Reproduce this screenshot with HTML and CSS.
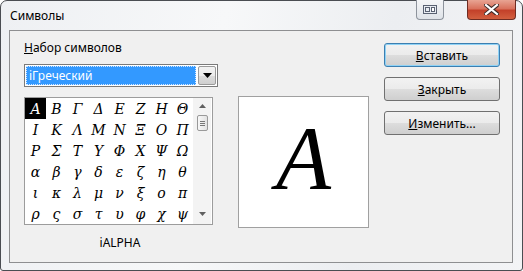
FILE: index.html
```html
<!DOCTYPE html>
<html>

<head>
    <title>Символы</title>
    <meta http-equiv="Content-Type" content="text/html;charset=UTF-8">
    <link rel="stylesheet" href="styles.css">
</head>

<body>
    <div class="window">
        <div class="titlebar">
            <span class="title">Символы</span>
            <div class="caption-buttons">
                <div class="caption-btn caption-btn--restore">
                    <svg width="14" height="9" viewBox="0 0 14 9">
                        <rect x="0.5" y="0.5" width="13" height="8" fill="#e8ecf2" stroke="#5a6272"/>
                        <rect x="2.5" y="2.5" width="4" height="4" fill="none" stroke="#5a6272"/>
                        <rect x="8.5" y="2.5" width="3" height="4" fill="#fff" stroke="#5a6272"/>
                    </svg>
                </div>
                <div class="caption-btn caption-btn--close">
                    <svg width="15" height="11" viewBox="0 0 15 11">
                        <path d="M2 1 L13 10 M13 1 L2 10" stroke="#3b2a28" stroke-width="4.2" stroke-linecap="square"/>
                        <path d="M2 1 L13 10 M13 1 L2 10" stroke="#fff" stroke-width="2.2" stroke-linecap="square"/>
                    </svg>
                </div>
            </div>
        </div>

        <div class="client">
            <div class="col-left">
                <div class="label"><u>Н</u>абор символов</div>
                <div class="select">
                    <div class="select__value"><span>iГреческий</span></div>
                    <div class="select__arrow">
                        <svg width="9" height="5" viewBox="0 0 9 5"><path d="M0 0 H9 L4.5 5 Z" fill="#000"/></svg>
                    </div>
                </div>
                <div class="charmap">
                    <div class="charmap__grid">
                        <span class="cell cell--selected">Α</span><span class="cell">Β</span><span class="cell">Γ</span><span class="cell">Δ</span><span class="cell">Ε</span><span class="cell">Ζ</span><span class="cell">Η</span><span class="cell">Θ</span>
                        <span class="cell">Ι</span><span class="cell">Κ</span><span class="cell">Λ</span><span class="cell">Μ</span><span class="cell">Ν</span><span class="cell">Ξ</span><span class="cell">Ο</span><span class="cell">Π</span>
                        <span class="cell">Ρ</span><span class="cell">Σ</span><span class="cell">Τ</span><span class="cell">Υ</span><span class="cell">Φ</span><span class="cell">Χ</span><span class="cell">Ψ</span><span class="cell">Ω</span>
                        <span class="cell">α</span><span class="cell">β</span><span class="cell">γ</span><span class="cell">δ</span><span class="cell">ε</span><span class="cell">ζ</span><span class="cell">η</span><span class="cell">θ</span>
                        <span class="cell">ι</span><span class="cell">κ</span><span class="cell">λ</span><span class="cell">μ</span><span class="cell">ν</span><span class="cell">ξ</span><span class="cell">ο</span><span class="cell">π</span>
                        <span class="cell">ρ</span><span class="cell">ς</span><span class="cell">σ</span><span class="cell">τ</span><span class="cell">υ</span><span class="cell">φ</span><span class="cell">χ</span><span class="cell">ψ</span>
                    </div>
                    <div class="scrollbar">
                        <svg width="7" height="4" viewBox="0 0 7 4"><path d="M0 4 L3.5 0 L7 4 Z" fill="#606060"/></svg>
                        <div class="scrollbar__thumb">
                            <i></i><i></i><i></i>
                        </div>
                        <div class="scrollbar__track"></div>
                        <svg width="7" height="4" viewBox="0 0 7 4"><path d="M0 0 L3.5 4 L7 0 Z" fill="#606060"/></svg>
                    </div>
                </div>
                <div class="char-name">iALPHA</div>
            </div>

            <div class="preview">Α</div>

            <div class="col-buttons">
                <button class="btn btn--default"><u>В</u>ставить</button>
                <button class="btn"><u>З</u>акрыть</button>
                <button class="btn"><u>И</u>зменить...</button>
            </div>
        </div>
    </div>
</body>

</html>
```

FILE: styles.css
```css
* {
    box-sizing: border-box;
}

body {
    margin: 0;
    font-family: "Noto Sans", "Open Sans", sans-serif;
    font-size: 12px;
    color: #000;
    background: #fff;
}

.window {
    width: 523px;
    height: 271px;
    border: 1px solid #4a4d52;
    border-radius: 7px 7px 3px 3px;
    background: linear-gradient(100deg, #eef0f3 0%, #f7f8f9 40%, #eceef1 70%, #f3f4f6 100%);
    padding: 0 9px 7px 8px;
    display: flex;
    flex-direction: column;
}

.titlebar {
    height: 29px;
    display: flex;
    align-items: flex-start;
}

.title {
    padding: 7px 0 0 1px;
    line-height: 16px;
}

.caption-buttons {
    margin-left: auto;
    margin-right: -3px;
    margin-top: -1px;
    display: flex;
    gap: 23px;
}

.caption-btn {
    height: 20px;
    display: flex;
    align-items: center;
    justify-content: center;
    border-radius: 0 0 4px 4px;
}

.caption-btn--restore {
    width: 28px;
    border: 1px solid #8d939c;
    border-top: none;
    background: linear-gradient(#f4f5f7, #dfe3e8);
}

.caption-btn--close {
    width: 49px;
    border: 1px solid #6e2c22;
    border-top: none;
    background: linear-gradient(#e8a493 0%, #d9725d 45%, #c3412a 55%, #d25f3f 100%);
}

.client {
    flex: 1;
    border: 1px solid #8e8f91;
    background: #f0f0f0;
    padding: 9px 0 0 14px;
    display: flex;
    align-items: flex-start;
}

.col-left {
    width: 194px;
    display: flex;
    flex-direction: column;
}

.label {
    line-height: 16px;
}

.select {
    margin-top: 8px;
    height: 23px;
    border: 1px solid #7a7a7a;
    background: #fff;
    display: flex;
    padding: 1px;
}

.select__value {
    flex: 1;
    background: #3399ff;
    color: #fff;
    border: 1px dotted #d0e6ff;
    padding-left: 2px;
    line-height: 17px;
}

.select__arrow {
    width: 18px;
    margin-left: 2px;
    border: 1px solid #9a9a9a;
    border-radius: 2px;
    background: linear-gradient(#f2f2f2 0%, #ebebeb 50%, #dcdcdc 51%, #cfcfcf 100%);
    display: flex;
    align-items: center;
    justify-content: center;
}

.charmap {
    margin-top: 10px;
    width: 189px;
    border: 1px solid #9c9c9c;
    background: #fff;
    display: flex;
}

.charmap__grid {
    display: grid;
    grid-template-columns: repeat(8, 21px);
    grid-auto-rows: 21px;
}

.cell {
    display: flex;
    align-items: center;
    justify-content: center;
    font-family: "DejaVu Serif", "Liberation Serif", serif;
    font-style: italic;
    font-size: 14px;
    line-height: 1;
}

.cell--selected {
    background: #000;
    color: #fff;
}

.scrollbar {
    width: 18px;
    background: #f3f3f3;
    display: flex;
    flex-direction: column;
    align-items: center;
    padding: 6px 0 8px;
}

.scrollbar__thumb {
    margin-top: 7px;
    width: 11px;
    height: 16px;
    border: 1px solid #999;
    border-radius: 2px;
    background: linear-gradient(90deg, #f8f8f8, #e2e2e2);
    display: flex;
    flex-direction: column;
    justify-content: center;
    align-items: center;
    gap: 1px;
}

.scrollbar__thumb i {
    display: block;
    width: 5px;
    height: 1px;
    background: #777;
}

.scrollbar__track {
    flex: 1;
}

.char-name {
    margin-top: 10px;
    text-align: center;
    line-height: 16px;
    padding-right: 2px;
}

.preview {
    margin: 56px 0 0 20px;
    width: 131px;
    height: 132px;
    border: 1px solid #a0a0a0;
    background: #fff;
    display: flex;
    align-items: center;
    justify-content: center;
    font-family: "Liberation Serif", "DejaVu Serif", serif;
    font-style: italic;
    font-size: 90px;
    line-height: 1;
    padding-bottom: 6px;
}

.col-buttons {
    margin: 3px 0 0 15px;
    display: flex;
    flex-direction: column;
    gap: 10px;
}

.btn {
    width: 116px;
    height: 24px;
    font-family: inherit;
    font-size: 12px;
    color: #000;
    border: 1px solid #707070;
    border-radius: 3px;
    background: linear-gradient(#f2f2f2 0%, #ebebeb 50%, #dddddd 51%, #cfcfcf 100%);
    padding: 0;
}

.btn--default {
    border-color: #3c7fb1;
    box-shadow: inset 0 0 0 1px #8fd2f5;
}
```
